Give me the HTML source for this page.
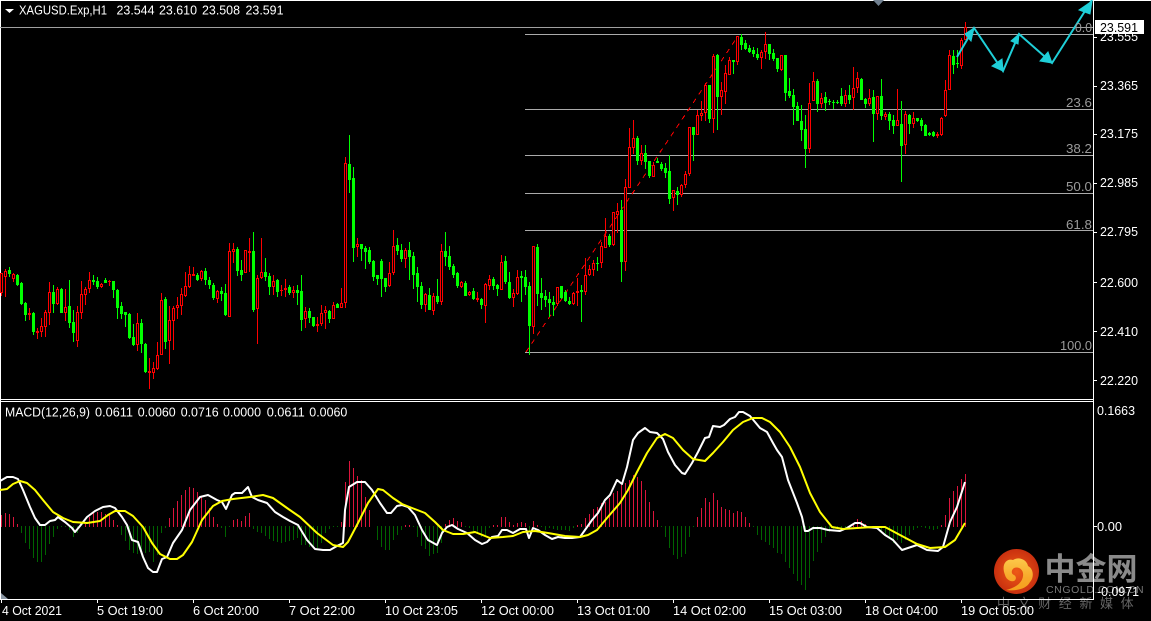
<!DOCTYPE html>
<html lang="zh"><head><meta charset="utf-8"><title>XAGUSD.Exp,H1</title>
<style>
html,body{margin:0;padding:0;background:#000;width:1151px;height:621px;overflow:hidden}
svg{position:absolute;left:0;top:0;display:block}
text{font-family:"Liberation Sans","Noto Sans CJK SC",sans-serif;font-size:12.8px;fill:#fff}
.f{fill:#9a9a9a}
</style></head><body>
<svg width="1151" height="621" viewBox="0 0 1151 621" xmlns="http://www.w3.org/2000/svg">
<defs>
<radialGradient id="lg" cx=".5" cy=".5" r=".5"><stop offset="0" stop-color="#ee5a16"/><stop offset="1" stop-color="#c9300f"/></radialGradient>
<linearGradient id="ly" x1="0" y1="0" x2="0" y2="1"><stop offset="0" stop-color="#fcc94a"/><stop offset=".6" stop-color="#f8a82a"/><stop offset="1" stop-color="#f5a01c"/></linearGradient>
</defs>
<!-- logo -->
<circle cx="1016.5" cy="571.5" r="22.5" fill="url(#lg)"/>
<path d="M1005 575C1001 565 1006 558 1013 560C1019 556 1027 560 1028 566C1034 569 1034 578 1030 582C1026 590 1014 591 1006 590C1014 588 1022 584 1023 576C1024 570 1019 566 1014 568C1011 570 1011 574 1014 575C1016 576 1017 579 1014 581C1010 582 1006 579 1005 575Z" fill="url(#ly)"/>
<text x="1044.5" y="580" style="font-size:31px;font-weight:700;fill:#8a8a8a">中金网</text>
<text x="1046" y="593" style="font-size:10.5px;fill:#7a7a7a;letter-spacing:.6px">CNGOLD.COM.CN</text>
<text x="997" y="608" style="font-size:13px;fill:#666;letter-spacing:7.6px">中文财经新媒体</text>
<!-- frame -->
<g shape-rendering="crispEdges" fill="none" stroke-width="1">
<path d="M0 .5H1151" stroke="#fff"/>
<path d="M.5 0V600M0 399.5H1094M0 401.5H1094M0 599.5H1094M1093.5 0V600" stroke="#fff"/>
<path d="M1094 37.5h3M1094 86.5h3M1094 134.5h3M1094 183.5h3M1094 232.5h3M1094 282.5h3M1094 331.5h3M1094 380.5h3M1094 526.5h3M1.5 600v3M97.5 600v3M193.5 600v3M289.5 600v3M385.5 600v3M481.5 600v3M577.5 600v3M673.5 600v3M769.5 600v3M865.5 600v3M961.5 600v3" stroke="#fff"/>
<!-- fib -->
<path d="M0 27.5H1093" stroke="#a0a0a0"/>
<path d="M525 34.5H1093M525 109.5H1093M525 155.5H1093M525 193.5H1093M525 230.5H1093M525 352.5H1093" stroke="#aaa"/>
<!-- trend -->
<path d="M526 352L738 36" stroke="#f00" stroke-dasharray="5 5"/>
<g transform="translate(.5 0)">
<!-- green wicks -->
<path stroke="#0f0" d="M9 267V277M17 274V286M21 282V305M25 302V321M33 312V335M53 285V313M61 288V313M69 280V328M73 310V342M93 275V285M97 277V289M105 278V283M113 281V298M117 289V319M121 302V319M125 312V327M129 313V339M133 324V346M141 319V353M145 343V373M165 297V349M197 273V281M205 268V285M209 277V289M213 283V300M221 287V301M225 284V316M237 247V276M241 260V281M253 232V312M265 258V281M269 273V295M277 279V297M289 285V295M297 285V305M301 275V331M309 308V323M313 317V327M329 310V323M337 303V308M349 135V193M353 167V262M361 244V261M365 246V269M369 247V264M373 260V281M377 275V285M381 259V297M385 278V292M397 238V255M401 244V262M409 242V280M413 252V289M417 267V302M421 282V309M429 288V310M437 279V304M445 232V266M449 246V270M453 264V278M457 272V288M465 281V296M473 288V300M481 298V309M493 277V290M497 284V296M505 256V284M509 272V299M521 271V302M525 270V295M529 282V355M537 244V306M541 278V310M545 290V307M549 292V317M553 296V316M561 286V299M565 290V302M569 297V305M581 285V322M597 257V271M609 234V247M621 200V282M637 136V165M645 145V169M649 161V178M657 158V163M661 162V171M665 163V178M669 155V204M677 187V205M693 127V161M709 85V123M717 54V130M733 60V74M741 34V50M745 40V50M749 45V53M753 47V57M757 48V60M769 44V60M773 49V61M777 58V72M785 55V101M789 78V98M793 89V125M797 102V121M801 105V141M805 115V168M817 79V112M825 92V111M829 99V105M833 100V109M837 100V104M841 88V106M849 85V104M861 78V100M865 98V108M873 90V142M881 79V120M889 112V130M893 115V134M901 101V182M909 114V134M917 118V122M921 118V131M925 124V136M929 132V136M933 131V137M953 50V74M957 50V68"/>
<!-- red wicks -->
<path stroke="#f00" d="M1 273V296M5 269V297M13 273V282M29 308V320M37 328V339M41 318V337M45 310V337M49 282V325M57 287V305M65 289V321M77 306V347M81 281V319M85 287V305M89 272V293M101 283V288M109 280V286M137 313V351M149 358V389M153 362V379M157 342V370M161 293V355M169 306V364M173 306V350M177 297V319M181 288V315M185 272V297M189 266V288M193 267V276M201 270V281M217 290V303M229 243V317M233 243V263M245 250V273M249 238V272M257 275V344M261 238V279M273 275V295M281 285V296M285 279V297M293 286V298M305 307V328M317 317V332M321 305V326M325 306V329M333 302V319M341 288V308M345 157V308M357 238V257M389 262V287M393 230V275M405 248V268M425 293V312M433 293V315M441 244V305M461 281V288M469 291V296M477 292V302M485 283V323M489 275V290M501 255V290M513 289V307M517 270V295M533 246V334M557 287V306M573 292V305M577 278V306M585 258V295M589 265V276M593 260V276M601 242V268M605 218V248M613 212V246M617 203V233M625 179V271M629 128V188M633 120V154M641 145V165M653 162V177M673 190V211M681 184V197M685 171V188M689 127V176M697 110V135M701 101V121M705 83V121M713 54V133M721 82V115M725 65V104M729 57V75M737 36V65M761 50V69M765 32V59M781 55V71M809 83V153M813 72V101M821 93V108M845 90V107M853 67V110M857 72V93M869 89V106M877 96V120M885 112V120M897 89V126M905 111V154M913 112V128M937 132V138M941 117V136M945 80V117M949 50V90M961 38V69M965 22V40"/>
<!-- green bodies -->
<path stroke="#0f0" stroke-width="3" d="M9 270V274M17 275V285M21 283V304M25 303V315M33 313V332M53 292V304M61 289V313M69 306V323M73 322V333M93 280V282M97 281V287M105 280V283M113 281V290M117 290V308M121 306V314M125 312V315M129 314V338M133 337V345M141 323V344M145 344V372M165 299V342M197 275V280M205 271V280M209 280V285M213 285V298M221 291V294M225 293V315M237 249V271M241 270V275M253 251V310M265 272V277M269 276V287M277 280V292M289 287V293M297 290V293M301 291V320M309 311V318M313 317V326M329 311V319M337 304V308M349 164V180M353 178V248M361 244V249M365 248V252M369 250V262M373 261V277M377 275V279M381 261V279M385 278V287M397 245V251M401 250V259M409 250V257M413 256V275M417 273V287M421 286V305M429 295V310M437 296V302M445 251V257M449 256V267M453 266V275M457 273V286M465 283V296M473 291V299M481 299V305M493 279V286M497 285V289M505 261V282M509 282V298M521 276V278M525 277V287M529 286V326M537 247V294M541 293V298M545 296V300M549 299V303M553 302V305M561 286V298M565 292V301M569 301V304M581 290V292M597 263V264M609 236V245M621 210V262M637 138V161M645 153V162M649 161V176M657 161V163M661 164V169M665 168V173M669 171V199M677 191V195M693 127V135M709 85V119M717 55V97M733 60V62M741 37V45M745 43V49M749 48V52M753 50V54M757 54V58M769 44V54M773 53V59M777 58V69M785 55V93M789 91V96M793 95V107M797 106V121M801 121V130M805 129V149M817 81V104M825 97V103M829 101V102M833 102V103M837 102V103M841 96V104M849 95V100M861 79V100M865 99V104M873 97V114M881 96V116M889 114V121M893 120V126M901 124V146M909 115V124M917 118V121M921 120V126M925 125V136M929 133V135M933 132V136M953 56V65M957 63V64"/>
<!-- red bodies -->
<path stroke="#f00" stroke-width="3" d="M1 273V293M5 271V277M13 274V279M29 313V315M37 331V333M41 326V332M45 312V327M49 292V313M57 289V304M65 307V313M77 312V341M81 294V313M85 289V295M89 280V289M101 284V287M109 281V282M137 323V345M149 371V373M153 368V373M157 355V369M161 300V355M169 320V341M173 308V321M177 305V308M181 294V306M185 286V296M189 274V287M193 274V276M201 271V279M217 291V299M229 251V317M233 249V252M245 250V273M249 251V253M257 278V309M261 272V278M273 281V287M281 290V291M285 288V290M293 290V293M305 311V319M317 324V326M321 313V324M325 310V313M333 305V319M341 303V308M345 163V303M357 244V247M389 273V286M393 246V273M405 250V259M425 294V305M433 296V311M441 251V302M461 282V287M469 292V295M477 298V300M485 284V306M489 279V286M501 262V290M513 293V298M517 277V294M533 246V327M557 287V304M573 293V304M577 291V293M585 275V292M589 269V275M593 263V270M601 246V263M605 236V248M613 212V245M617 211V215M625 187V262M629 147V188M633 138V148M641 153V161M653 165V177M673 190V198M681 185V195M685 174V185M689 127V174M697 115V135M701 113V116M705 85V113M713 56V119M721 90V97M725 73V92M729 60V75M737 36V62M761 52V58M765 44V52M781 55V70M809 103V149M813 81V101M821 98V104M845 95V104M853 88V98M857 78V88M869 98V104M877 96V114M885 114V117M897 120V126M905 114V145M913 118V124M937 134V136M941 118V135M945 90V116M949 55V90M961 40V66M965 27V40"/>
<!-- red body interior -->
<path stroke="#000" d="M1 274V292M5 272V276M13 275V278M41 327V331M45 313V326M49 293V312M57 290V303M65 308V312M77 313V340M81 295V312M85 290V294M89 281V288M101 285V286M137 324V344M153 369V372M157 356V368M161 301V354M169 321V340M173 309V320M177 306V307M181 295V305M185 287V295M189 275V286M201 272V278M217 292V298M229 252V316M233 250V251M245 251V272M257 279V308M261 273V277M273 282V286M293 291V292M305 312V318M321 314V323M325 311V312M333 306V318M341 304V307M345 164V302M357 245V246M389 274V285M393 247V272M405 251V258M425 295V304M433 297V310M441 252V301M461 283V286M469 293V294M485 285V305M489 280V285M501 263V289M513 294V297M517 278V293M533 247V326M557 288V303M573 294V303M585 276V291M589 270V274M593 264V269M601 247V262M605 237V247M613 213V244M617 212V214M625 188V261M629 148V187M633 139V147M641 154V160M653 166V176M673 191V197M681 186V194M685 175V184M689 128V173M697 116V134M701 114V115M705 86V112M713 57V118M721 91V96M725 74V91M729 61V74M737 37V61M761 53V57M765 45V51M781 56V69M809 104V148M813 82V100M821 99V103M845 96V103M853 89V97M857 79V87M869 99V103M877 97V113M885 115V116M897 121V125M905 115V144M913 119V123M941 119V134M945 91V115M949 56V89M961 41V65M965 28V39"/>
<!-- MACD histogram -->
<path stroke="#dc143c" d="M1 515V527M5 513V527M9 514V527M13 517V527M17 524V527M85 524V527M89 517V527M93 513V527M97 512V527M101 512V527M105 514V527M109 515V527M113 520V527M117 525V527M169 518V527M173 508V527M177 501V527M181 495V527M185 490V527M189 487V527M193 488V527M197 492V527M201 497V527M205 500V527M209 508V527M213 517V527M217 524V527M233 520V527M237 519V527M241 521V527M245 516V527M249 513V527M341 522V527M345 482V527M349 461V527M353 468V527M357 476V527M361 480V527M365 497V527M369 510V527M405 525V527M409 525V527M445 524V527M449 520V527M453 518V527M457 521V527M461 522V527M493 525V527M497 525V527M501 517V527M505 517V527M509 522V527M513 525V527M517 523V527M521 522V527M525 523V527M533 521V527M537 525V527M577 525V527M581 524V527M585 518V527M589 514V527M593 509V527M597 507V527M601 503V527M605 502V527M609 498V527M613 493V527M617 491V527M621 485V527M625 483V527M629 480V527M633 475V527M637 477V527M641 481V527M645 490V527M649 502V527M653 511V527M657 520V527M697 517V527M701 508V527M705 498V527M709 502V527M713 493V527M717 500V527M721 507V527M725 509V527M729 510V527M733 513V527M737 511V527M741 512V527M745 517V527M749 523V527M853 523V527M857 519V527M861 521V527M865 524V527M941 525V527M945 515V527M949 498V527M953 491V527M957 486V527M961 479V527M965 474V527"/>
<path stroke="#006400" d="M21 526V533M25 526V543M29 526V549M33 526V558M37 526V562M41 526V562M45 526V555M49 526V544M53 526V537M57 526V529M61 526V527M65 526V527M69 526V530M73 526V537M77 526V533M121 526V535M125 526V541M129 526V550M133 526V553M137 526V554M141 526V550M145 526V553M149 526V552M153 526V562M157 526V555M161 526V533M165 526V528M221 526V528M225 526V537M229 526V527M253 526V529M257 526V532M261 526V533M265 526V536M269 526V539M273 526V541M277 526V542M281 526V543M285 526V542M289 526V541M293 526V540M297 526V538M301 526V545M305 526V545M309 526V547M313 526V547M317 526V548M321 526V543M325 526V533M329 526V529M333 526V527M337 526V527M377 526V540M381 526V547M385 526V550M389 526V550M393 526V540M397 526V535M401 526V530M413 526V527M417 526V537M421 526V546M425 526V549M429 526V556M433 526V554M437 526V553M441 526V543M465 526V527M469 526V528M473 526V532M477 526V533M481 526V537M485 526V535M489 526V528M529 526V532M541 526V527M545 526V530M549 526V528M553 526V529M557 526V530M561 526V530M565 526V530M569 526V531M573 526V528M661 526V527M665 526V537M669 526V548M673 526V555M677 526V559M681 526V557M685 526V554M689 526V537M693 526V527M753 526V527M757 526V535M761 526V540M765 526V542M769 526V545M773 526V548M777 526V553M781 526V554M785 526V562M789 526V568M793 526V574M797 526V581M801 526V585M805 526V590M809 526V578M813 526V561M817 526V552M821 526V543M825 526V537M829 526V532M833 526V529M837 526V528M841 526V528M845 526V528M849 526V528M869 526V527M873 526V527M877 526V528M881 526V532M885 526V535M889 526V538M893 526V543M897 526V540M901 526V543M905 526V540M909 526V535M913 526V530M917 526V528M921 526V527M925 526V528M929 526V529M933 526V530M937 526V529"/>
</g>
</g>
<!-- MACD lines -->
<polyline fill="none" stroke="#fff" stroke-width="2" stroke-linejoin="round" points="0,481 7,477 13,477 18,479 23,490 30,507 35,518 40,525 45,525 50,521 55,520 58,517 65,522 72,528 75,532 80,526 87,517 95,511 103,507 110,506 115,508 122,517 127,525 132,540 138,542 143,557 148,568 153,572 157,572 162,559 167,557 173,543 182,530 190,510 200,497 208,495 217,500 222,502 226,509 232,495 235,493 242,493 248,487 252,497 258,500 267,503 275,512 283,517 290,521 298,525 307,540 315,549 323,550 330,550 337,546 343,543 345,510 349,487 357,482 365,482 372,490 380,503 387,513 391,513 397,506 402,505 408,507 415,515 422,530 428,540 437,545 442,533 447,527 452,525 458,529 467,533 475,540 482,544 487,542 492,537 498,536 502,530 507,530 513,533 520,529 526,529 529,538 533,528 538,530 545,535 552,539 558,537 565,538 572,538 580,537 585,530 592,520 598,513 605,500 610,495 617,480 622,484 627,467 633,440 638,433 645,428 650,432 657,433 663,439 668,452 675,465 682,473 685,474 692,463 698,452 705,438 709,437 713,426 720,427 724,425 730,419 735,417 739,412 743,412 750,416 760,428 767,432 773,443 777,450 782,457 788,480 797,503 802,517 805,531 808,531 813,528 820,528 828,530 840,531 847,528 855,523 860,523 867,527 877,528 885,535 893,540 902,550 908,548 917,545 927,550 938,551 943,547 950,522 957,507 965,482"/>
<polyline fill="none" stroke="#ff0" stroke-width="2" stroke-linejoin="round" points="0,490 7,489 13,484 20,481 27,483 35,490 43,500 53,512 63,518 73,522 87,523 100,521 108,515 115,511 125,511 133,516 143,527 152,543 160,554 170,559 177,559 183,555 192,542 202,520 213,506 222,501 233,499 250,497 263,495 273,498 287,508 300,517 317,533 333,545 343,547 348,542 358,523 368,503 378,489 383,490 393,498 402,504 412,508 425,513 435,522 443,530 453,534 463,534 475,532 480,534 490,538 503,537 513,536 523,532 535,531 548,533 565,536 580,537 588,535 597,530 607,518 620,503 628,490 637,472 647,453 657,438 665,434 673,438 683,450 693,459 705,461 713,453 723,442 733,430 743,422 753,418 762,418 770,422 780,432 790,447 800,467 810,493 820,512 832,527 843,529 857,528 873,527 885,527 900,535 917,544 930,548 945,547 955,540 965,523"/>
<!-- arrows -->
<g fill="#1fcfd8" stroke="#1fcfd8">
<polyline fill="none" stroke-width="2" points="957,57 974,28 1003,71 1019,34 1052,63 1092,0"/>
<path stroke-width="1" d="M974 28L965 34L971 41ZM1003 71L992 66L1002 59ZM1019 34L1011 41L1018 44ZM1052 63L1040 61L1048 52ZM1092 1L1079 10L1090 14Z"/>
</g>
<!-- markers -->
<path d="M873 0H884L878.5 6Z" fill="#708090"/>
<path d="M1 593V599H8Z" fill="#8a96a3"/>
<path d="M5 9H14L9.5 13Z" fill="#fff"/>
<!-- header -->
<g lengthAdjust="spacingAndGlyphs">
<text x="19" y="14.5" textLength="88" lengthAdjust="spacingAndGlyphs">XAGUSD.Exp,H1</text>
<text x="116.5" y="14.5" textLength="38" lengthAdjust="spacingAndGlyphs">23.544</text><text x="159" y="14.5" textLength="38" lengthAdjust="spacingAndGlyphs">23.610</text><text x="202" y="14.5" textLength="38" lengthAdjust="spacingAndGlyphs">23.508</text><text x="245.5" y="14.5" textLength="38" lengthAdjust="spacingAndGlyphs">23.591</text>
<!-- fib labels -->
<text class="f" x="1066" y="107" textLength="26" lengthAdjust="spacingAndGlyphs">23.6</text>
<text class="f" x="1075" y="32" textLength="17" lengthAdjust="spacingAndGlyphs">0.0</text>
<text class="f" x="1066" y="153" textLength="26" lengthAdjust="spacingAndGlyphs">38.2</text>
<text class="f" x="1066" y="191" textLength="26" lengthAdjust="spacingAndGlyphs">50.0</text>
<text class="f" x="1066" y="229" textLength="26" lengthAdjust="spacingAndGlyphs">61.8</text>
<text class="f" x="1060" y="350" textLength="32" lengthAdjust="spacingAndGlyphs">100.0</text>
<!-- axis -->
<text x="1100" y="41" textLength="38" lengthAdjust="spacingAndGlyphs">23.555</text>
<rect x="1095" y="20" width="49" height="14" fill="#fff"/>
<text x="1100" y="32" style="fill:#000" textLength="38" lengthAdjust="spacingAndGlyphs">23.591</text>
<text x="1100" y="90" textLength="38" lengthAdjust="spacingAndGlyphs">23.365</text>
<text x="1100" y="138" textLength="38" lengthAdjust="spacingAndGlyphs">23.175</text>
<text x="1100" y="187" textLength="38" lengthAdjust="spacingAndGlyphs">22.985</text>
<text x="1100" y="236" textLength="38" lengthAdjust="spacingAndGlyphs">22.795</text>
<text x="1100" y="287" textLength="38" lengthAdjust="spacingAndGlyphs">22.600</text>
<text x="1100" y="336" textLength="38" lengthAdjust="spacingAndGlyphs">22.410</text>
<text x="1100" y="385" textLength="38" lengthAdjust="spacingAndGlyphs">22.220</text>
<text x="1097" y="415" textLength="38" lengthAdjust="spacingAndGlyphs">0.1663</text>
<text x="1097" y="531" textLength="25" lengthAdjust="spacingAndGlyphs">0.00</text>
<text x="1097" y="596" textLength="42" lengthAdjust="spacingAndGlyphs">-0.0971</text>
<!-- MACD label -->
<text x="5" y="416.5" textLength="85" lengthAdjust="spacingAndGlyphs">MACD(12,26,9)</text>
<text x="95" y="416.5" textLength="38" lengthAdjust="spacingAndGlyphs">0.0611</text><text x="137.7" y="416.5" textLength="38" lengthAdjust="spacingAndGlyphs">0.0060</text><text x="180.7" y="416.5" textLength="38" lengthAdjust="spacingAndGlyphs">0.0716</text><text x="223" y="416.5" textLength="38" lengthAdjust="spacingAndGlyphs">0.0000</text><text x="266.7" y="416.5" textLength="38" lengthAdjust="spacingAndGlyphs">0.0611</text><text x="309.3" y="416.5" textLength="38" lengthAdjust="spacingAndGlyphs">0.0060</text>
<!-- time -->
<text x="2" y="615" textLength="60" lengthAdjust="spacingAndGlyphs">4 Oct 2021</text>
<text x="97" y="615" textLength="66" lengthAdjust="spacingAndGlyphs">5 Oct 19:00</text>
<text x="193" y="615" textLength="66" lengthAdjust="spacingAndGlyphs">6 Oct 20:00</text>
<text x="289" y="615" textLength="66" lengthAdjust="spacingAndGlyphs">7 Oct 22:00</text>
<text x="385" y="615" textLength="73" lengthAdjust="spacingAndGlyphs">10 Oct 23:05</text>
<text x="481" y="615" textLength="73" lengthAdjust="spacingAndGlyphs">12 Oct 00:00</text>
<text x="577" y="615" textLength="73" lengthAdjust="spacingAndGlyphs">13 Oct 01:00</text>
<text x="673" y="615" textLength="73" lengthAdjust="spacingAndGlyphs">14 Oct 02:00</text>
<text x="769" y="615" textLength="73" lengthAdjust="spacingAndGlyphs">15 Oct 03:00</text>
<text x="865" y="615" textLength="73" lengthAdjust="spacingAndGlyphs">18 Oct 04:00</text>
<text x="961" y="615" textLength="73" lengthAdjust="spacingAndGlyphs">19 Oct 05:00</text>
</g>
</svg>
</body></html>
